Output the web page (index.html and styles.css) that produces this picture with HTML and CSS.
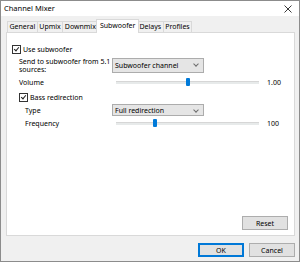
FILE: index.html
```html
<!DOCTYPE html>
<html lang="en">
<head>
    <meta charset="UTF-8">
    <title>Channel Mixer</title>
    <link rel="stylesheet" href="styles.css">
</head>
<body>

<div class="window">
    <div class="titlebar">
        <span class="title">Channel Mixer</span>
        <svg class="close" width="8" height="8" viewBox="0 0 8 8">
            <path d="M0.5 0.5 L7.5 7.5 M7.5 0.5 L0.5 7.5" stroke="#222" stroke-width="0.9" fill="none"/>
        </svg>
    </div>

    <div class="body">
        <div class="tabs">
            <div class="tab">General</div>
            <div class="tab">Upmix</div>
            <div class="tab">Downmix</div>
            <div class="tab active">Subwoofer</div>
            <div class="tab">Delays</div>
            <div class="tab">Profiles</div>
        </div>

        <div class="panel">
            <label class="check row-use">
                <span class="box checked"></span>
                <span>Use subwoofer</span>
            </label>

            <div class="group">
                <div class="row row-send">
                    <div class="label">Send to subwoofer from 5.1<br>sources:</div>
                    <div class="select">Subwoofer channel</div>
                </div>
                <div class="row row-volume">
                    <div class="label">Volume</div>
                    <div class="slider">
                        <div class="track"></div>
                        <div class="thumb" style="left: 50.5%"></div>
                    </div>
                    <div class="value">1.00</div>
                </div>

                <label class="check row-bass">
                    <span class="box checked"></span>
                    <span>Bass redirection</span>
                </label>

                <div class="row row-type">
                    <div class="label sub">Type</div>
                    <div class="select">Full redirection</div>
                </div>
                <div class="row row-freq">
                    <div class="label sub">Frequency</div>
                    <div class="slider">
                        <div class="track"></div>
                        <div class="thumb" style="left: 27.5%"></div>
                    </div>
                    <div class="value">100</div>
                </div>
            </div>

            <div class="panel-foot">
                <button class="btn">Reset</button>
            </div>
        </div>

        <div class="footer">
            <button class="btn default">OK</button>
            <button class="btn">Cancel</button>
        </div>
    </div>
</div>

</body>
</html>
```

FILE: styles.css
```css
body {
    margin: 0;
    padding: 0;
    background-color: #ffffff;
    font-family: "Noto Sans", "Open Sans", sans-serif;
    font-size: 7px;
    color: #000;
}
.window {
    width: 300px;
    height: 262px;
    box-sizing: border-box;
    border: 1px solid #8c8c8c;
    display: flex;
    flex-direction: column;
    background-color: #f0f0f0;
}
.titlebar {
    flex-shrink: 0;
    height: 15px;
    background-color: #fff;
    display: flex;
    align-items: center;
    justify-content: space-between;
    padding: 0 7px 0 3px;
}
.title {
    font-size: 7.5px;
    margin-top: -1px;
}
.body {
    flex: 1;
    display: flex;
    flex-direction: column;
    padding: 0 4px 0 5px;
}

/* tabs */
.tabs {
    flex-shrink: 0;
    display: flex;
    align-items: flex-end;
    height: 16px;
    margin-left: 1px;
}
.tab {
    height: 10px;
    line-height: 10px;
    padding: 0 1.5px;
    border: 1px solid #d9d9d9;
    border-bottom: none;
    margin-right: -1px;
    background-color: #f0f0f0;
}
.tab.active {
    height: 13px;
    line-height: 12px;
    background-color: #fff;
    position: relative;
    z-index: 1;
    margin-bottom: -1px;
    padding: 0 2.5px;
    margin-left: -1px;
    margin-right: -2px;
}

/* panel */
.panel {
    flex-shrink: 0;
    box-sizing: border-box;
    height: 204px;
    border: 1px solid #d9d9d9;
    background-color: #fff;
    display: flex;
    flex-direction: column;
    padding-left: 5px;
    padding-top: 11px;
}
.check {
    display: flex;
    align-items: center;
    height: 10px;
    gap: 2px;
}
.box {
    width: 7px;
    height: 7px;
    border: 1px solid #333;
    position: relative;
    background: #fff;
}
.box.checked::after {
    content: "";
    position: absolute;
    left: 2px;
    top: 0px;
    width: 2px;
    height: 4px;
    border: solid #222;
    border-width: 0 1px 1px 0;
    transform: rotate(40deg);
}
.group {
    margin-left: 7px;
}
.row {
    display: grid;
    grid-template-columns: 93px 147px 1fr;
    align-items: center;
}
.label.sub {
    padding-left: 6px;
}
.row-send {
    margin-top: 4px;
    height: 13px;
}
.row-send .label {
    line-height: 7.5px;
}
.row-volume {
    margin-top: 6px;
    height: 10px;
}
.row-bass {
    margin-top: 5px;
}
.row-type {
    margin-top: 2px;
    height: 12px;
}
.row-freq {
    margin-top: 2px;
    height: 10px;
}
.select {
    width: 92px;
    height: 100%;
    box-sizing: border-box;
    border: 1px solid #acacac;
    background-color: #e5e5e5;
    padding-left: 2px;
    display: flex;
    align-items: center;
    position: relative;
}
.select::after {
    content: "";
    position: absolute;
    right: 5px;
    top: 3px;
    width: 3px;
    height: 3px;
    border: solid #6d6d6d;
    border-width: 0 1px 1px 0;
    transform: rotate(45deg);
}
.slider {
    position: relative;
    height: 10px;
    margin-left: 4px;
}
.track {
    position: absolute;
    left: 0;
    right: 0;
    top: 4px;
    height: 2px;
    background-color: #e7eaea;
    border-top: 1px solid #d6d6d6;
}
.thumb {
    position: absolute;
    top: 1px;
    width: 4px;
    height: 8px;
    margin-left: -2px;
    background-color: #007ad9;
    border-radius: 1px;
}
.value {
    padding-left: 8px;
}

/* buttons */
.btn {
    font-family: "Noto Sans", "Open Sans", sans-serif;
    font-size: 7px;
    width: 46px;
    height: 14px;
    padding: 0;
    border: 1px solid #adadad;
    background-color: #e1e1e1;
    color: #000;
}
.btn.default {
    border: 1px solid #0078d7;
    box-shadow: inset 0 0 0 1px #0078d7;
}
.panel-foot {
    margin-top: auto;
    display: flex;
    justify-content: flex-end;
    padding: 0 6px 5px 0;
}
.footer {
    display: flex;
    justify-content: flex-end;
    gap: 5px;
    margin-top: 7px;
}
```
